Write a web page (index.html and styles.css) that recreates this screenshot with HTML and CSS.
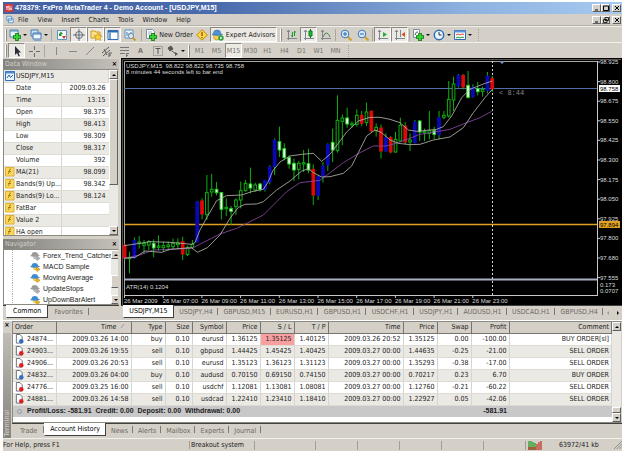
FILE: index.html
```html
<!DOCTYPE html>
<html lang="en">
<head>
<meta charset="utf-8">
<title>478379: FxPro MetaTrader 4 - Demo Account</title>
<link rel="stylesheet" href="styles.css">
</head>
<body>
<svg class="defs" aria-hidden="true">
  <defs>
    <symbol id="i-plus-chart" viewBox="0 0 12 12"><path d="M1 1h8v7H1z" fill="#e8f2fb" stroke="#4a86b8"/><path d="M1 2h8" stroke="#4a86b8"/><path d="M8 4v8M4 8h8" stroke="#0a7a0a" stroke-width="3.600"/><path d="M8 4.800v6.400M4.800 8h6.400" stroke="#3ad03a" stroke-width="2"/></symbol>
    <symbol id="i-profiles" viewBox="0 0 12 12"><path d="M1 1h7v6H1z" fill="#cfe3f6" stroke="#3f79b4"/><path d="M3 4h8v6H3z" fill="#eef6fd" stroke="#3f79b4"/><path d="M3 5h8" stroke="#3f79b4"/><path d="M4 11.500h7" stroke="#7da7d0"/></symbol>
    <symbol id="i-market" viewBox="0 0 12 12"><path d="M1.500 1.500h9v9h-9z" fill="#f4f9fe" stroke="#5a93c4"/><path d="M3 5l2-2.500L7 5z" fill="#1c9a2c"/><path d="M3 5h2.500v2H3z" fill="#1c9a2c"/><path d="M6 7h4L8 10z" fill="#d03a1c"/></symbol>
    <symbol id="i-target" viewBox="0 0 12 12"><circle cx="6" cy="6" r="3.500" fill="none" stroke="#5e6a76"/><path d="M6 0v12M0 6h12" stroke="#5e6a76"/></symbol>
    <symbol id="i-nav" viewBox="0 0 12 12"><path d="M1 2h4l1 1h4v6H1z" fill="#fbe08a" stroke="#c99b22"/><path d="M8 4l1.200 2.500 2.800.3-2 1.800.6 2.900L8 10l-2.600 1.500.6-2.900-2-1.800 2.800-.3z" fill="#ffd23a" stroke="#b8860b" stroke-width=".6"/></symbol>
    <symbol id="i-terminal" viewBox="0 0 12 12"><path d="M1 1.500h10v9H1z" fill="#fff" stroke="#2f6cb5"/><path d="M1 2.500h10" stroke="#2f6cb5" stroke-width="2"/><path d="M3 3v7" stroke="#6ea2d8" stroke-width="2"/></symbol>
    <symbol id="i-tester" viewBox="0 0 12 12"><path d="M1 1h8v8H1z" fill="#eef5fb" stroke="#5a93c4"/><path d="M3 3v4M5 4v3M7 3v3" stroke="#3f79b4"/><circle cx="7" cy="7" r="2.500" fill="#d8ecfa" stroke="#7a8a99"/><path d="M9 9l2.500 2.500" stroke="#c99b22" stroke-width="2"/></symbol>
    <symbol id="i-order" viewBox="0 0 12 12"><path d="M1.500.5h6l2 2v7h-8z" fill="#fff" stroke="#7b8fa3"/><path d="M3 3h4M3 5h5" stroke="#9ab"/><path d="M8 4v8M4 8h8" stroke="#0a7a0a" stroke-width="3.600"/><path d="M8 4.800v6.400M4.800 8h6.400" stroke="#3ad03a" stroke-width="2"/></symbol>
    <symbol id="i-alert" viewBox="0 0 12 12"><path d="M6 .7L11.300 6 6 11.300.7 6z" fill="#ffd84a" stroke="#c48a00"/><path d="M6 3v4M6 8v1.200" stroke="#7a4b00" stroke-width="1.200"/></symbol>
    <symbol id="i-expert" viewBox="0 0 12 12"><circle cx="5" cy="7.500" r="3.500" fill="#f6cf56" stroke="#b98a16" stroke-width=".6"/><path d="M0 5.500Q2 4.500 2.200 2 5 0 8 2q0 3 2.500 3.500Q5 7.500 0 5.500z" fill="#4f93d4" stroke="#2f68a6" stroke-width=".6"/><circle cx="9" cy="9" r="2.700" fill="#25a035"/><path d="M8.200 7.500L10.500 9l-2.300 1.500z" fill="#fff"/></symbol>
    <symbol id="i-bars" viewBox="0 0 12 12"><path d="M2.500 1v10M1 9.500h10M1 3l1.500-2L4 3" fill="none" stroke="#7e868e"/><path d="M6.500 3v5M5 7h1.500M8.500 2v5M8.500 3H10" stroke="#1c9a2c"/></symbol>
    <symbol id="i-candles" viewBox="0 0 12 12"><path d="M2.500 1v10M1 9.500h10M1 3l1.500-2L4 3" fill="none" stroke="#7e868e"/><path d="M7.500 0v9" stroke="#087a18"/><path d="M6 2h3v5H6z" fill="#1ec23a" stroke="#087a18"/></symbol>
    <symbol id="i-line" viewBox="0 0 12 12"><path d="M2.500 1v10M1 9.500h10M1 3l1.500-2L4 3" fill="none" stroke="#7e868e"/><path d="M3 8q2-5 4-4t3 4" fill="none" stroke="#4c8a56"/></symbol>
    <symbol id="i-zoomin" viewBox="0 0 12 12"><path d="M7.500 7.500l4 4" stroke="#d0a020" stroke-width="2"/><circle cx="5" cy="5" r="3.800" fill="#d5eafc" stroke="#3f79b4"/><path d="M5 3v4M3 5h4" stroke="#2a62a8"/></symbol>
    <symbol id="i-zoomout" viewBox="0 0 12 12"><path d="M7.500 7.500l4 4" stroke="#d0a020" stroke-width="2"/><circle cx="5" cy="5" r="3.800" fill="#d5eafc" stroke="#3f79b4"/><path d="M3 5h4" stroke="#2a62a8"/></symbol>
    <symbol id="i-scroll" viewBox="0 0 12 12"><path d="M2.500 1v10M1 9.500h10M1 3l1.500-2L4 3" fill="none" stroke="#7e868e"/><path d="M6 3l4 2.500L6 8z" fill="#1eae34"/></symbol>
    <symbol id="i-shift" viewBox="0 0 12 12"><path d="M2.500 1v10M1 9.500h10M1 3l1.500-2L4 3M6.500 1v7" fill="none" stroke="#7e868e"/><path d="M11 3v5L7.500 5.500z" fill="#d4501c"/></symbol>
    <symbol id="i-indicators" viewBox="0 0 12 12"><path d="M1.500.5h6v8h-6z" fill="#fff" stroke="#7b8fa3"/><path d="M3 6q1-4 3-3" fill="none" stroke="#456"/><path d="M8 4v8M4 8h8" stroke="#0a7a0a" stroke-width="3.600"/><path d="M8 4.800v6.400M4.800 8h6.400" stroke="#3ad03a" stroke-width="2"/></symbol>
    <symbol id="i-clock" viewBox="0 0 12 12"><circle cx="6" cy="6" r="4.700" fill="#eaf4fd" stroke="#2f6cb5" stroke-width="1.500"/><path d="M6 3v3h2.500" fill="none" stroke="#234"/></symbol>
    <symbol id="i-template" viewBox="0 0 12 12"><path d="M.5 1.500h11v9H.5z" fill="#fff" stroke="#2f6cb5"/><path d="M.5 2.500h11" stroke="#5b97d8" stroke-width="2"/><path d="M2 6l2-1 2 1 2-1 2 .5" fill="none" stroke="#d04a2a"/><path d="M2 9l2-1 2 1 2-1 2 .5" fill="none" stroke="#1c9a2c"/></symbol>
    <symbol id="i-cursor" viewBox="0 0 12 12"><path d="M4 1v9l2-2 1.500 3.500 1.300-.6L7.500 7.500H10z" fill="#2b2f38"/></symbol>
    <symbol id="i-cross" viewBox="0 0 12 12"><path d="M6.500 1v4M6.500 8v4M1 6.500h4M8 6.500h4" stroke="#6a6a6a"/></symbol>
    <symbol id="i-vline" viewBox="0 0 12 12"><path d="M6.500 2v8" stroke="#888"/></symbol>
    <symbol id="i-hline" viewBox="0 0 12 12"><path d="M2 6.500h8" stroke="#888"/></symbol>
    <symbol id="i-trend" viewBox="0 0 12 12"><path d="M2 10l8-8" stroke="#888"/></symbol>
    <symbol id="i-channel" viewBox="0 0 12 12"><path d="M1 8l7-6M2 11l7-6M3 4l3 6M8 8h3M8 8v4M8 10h2" fill="none" stroke="#5c5c5c"/></symbol>
    <symbol id="i-fibo" viewBox="0 0 12 12"><path d="M2 2.500h9M2 5.500h9M2 8.500h5M8.500 8v4M8.500 8.500H11M8.500 10.500H10" stroke="#777"/></symbol>
    <symbol id="i-label" viewBox="0 0 12 12"><path d="M1.500 1.500h9v9h-9z" fill="none" stroke="#777" stroke-dasharray="1 1"/><path d="M3.500 3.500h5M6 3.500V9" stroke="#555"/></symbol>
    <symbol id="i-arrows" viewBox="0 0 12 12"><path d="M1 3l3-2 2 3-3 2zM5 6l4 3" fill="#555" stroke="#555"/><path d="M8 7l3 2-3 2z" fill="#555"/></symbol>
    <symbol id="i-hat" viewBox="0 0 12 10"><circle cx="6" cy="5.500" r="3" fill="#f6cf56"/><path d="M0 5Q2 4 2.500 1.500 5-.5 8 1.500q0 2.500 3 3Q6 7 0 5z" fill="#3f8bd0"/><path d="M8 5.500l3 2-3 2.500-2-2z" fill="#e8b52a" stroke="#a97a10" stroke-width=".5"/></symbol>
    <symbol id="i-hat-off" viewBox="0 0 12 10"><circle cx="6" cy="5.500" r="3" fill="#c4c4c4"/><path d="M0 5Q2 4 2.500 1.500 5-.5 8 1.500q0 2.500 3 3Q6 7 0 5z" fill="#9a9a9a"/><path d="M8 5.500l3 2-3 2.500-2-2z" fill="#b0b0b0" stroke="#888" stroke-width=".5"/></symbol>
    <symbol id="i-f" viewBox="0 0 10 10"><path d="M.5.500h8.500v8.500H.5z" fill="#f9d65c" stroke="#e0b030"/><path d="M6 2q-1.500-.5-1.500 1.500T3 7M3 4.500h3" fill="none" stroke="#a07a10"/></symbol>
    <symbol id="i-wave" viewBox="0 0 10 10"><path d="M.5.500h9v9h-9z" fill="#eaf4fd" stroke="#2f6cb5"/><path d="M.5 1.500h9" stroke="#4a8ad0" stroke-width="2"/><path d="M2 7l2-3 1.500 2.500L8 4" fill="none" stroke="#2a62a8"/></symbol>
    <symbol id="i-buy" viewBox="0 0 10 11"><path d="M1.500.5h4l2.500 2.500v7h-6.500z" fill="#fff" stroke="#5b6470"/><circle cx="7" cy="8" r="2.500" fill="#2f6fc0"/></symbol>
    <symbol id="i-sell" viewBox="0 0 10 11"><path d="M1.500.5h4l2.500 2.500v7h-6.500z" fill="#fff" stroke="#5b6470"/><circle cx="7" cy="8" r="2.500" fill="#e01c1c"/></symbol>
  </defs>
</svg>

<div class="app">
  <header class="titlebar">
    <svg class="logo" viewBox="0 0 8 8"><path d="M0 0h8v8H0z" fill="#d8383c"/><path d="M2 2v4M4 1.500v5M6 2v4M1 3h3M4 5h3" stroke="#fff" stroke-width=".8"/></svg>
    <h1>478379: FxPro MetaTrader 4 - Demo Account - [USDJPY,M15]</h1>
    <span class="winbtns">
      <button aria-label="Minimize"><svg viewBox="0 0 6 6"><path d="M1 5h3" stroke="#000"/></svg></button>
      <button aria-label="Maximize"><svg viewBox="0 0 6 6"><path d="M.5 1h5v4.500h-5z" fill="none" stroke="#000"/></svg></button>
      <button aria-label="Close"><svg viewBox="0 0 6 6"><path d="M1 1l4 4M5 1L1 5" stroke="#000"/></svg></button>
    </span>
  </header>

  <nav class="menubar">
    <svg class="menuicon" viewBox="0 0 10 10"><path d="M1 1h6v5H1zM3 4h6v5H3z" fill="#eaf4fd" stroke="#4a86c8"/></svg>
    <button>File</button><button>View</button><button>Insert</button><button>Charts</button><button>Tools</button><button>Window</button><button>Help</button>
    <span class="winbtns">
      <button aria-label="Minimize chart"><svg viewBox="0 0 6 6"><path d="M1 5h3" stroke="#000"/></svg></button>
      <button aria-label="Restore chart"><svg viewBox="0 0 6 6"><path d="M2 .5h3.500v3H2zM.5 2.500H4v3H.5z" fill="#d4d0c8" stroke="#000" stroke-width=".8"/></svg></button>
      <button aria-label="Close chart"><svg viewBox="0 0 6 6"><path d="M1 1l4 4M5 1L1 5" stroke="#000"/></svg></button>
    </span>
  </nav>

  <div class="toolbar">
    <i class="grip"></i>
    <button class="tool drop" aria-label="New chart"><svg><use href="#i-plus-chart"/></svg></button>
    <button class="tool drop" aria-label="Profiles"><svg><use href="#i-profiles"/></svg></button>
    <i class="sep"></i>
    <button class="tool" aria-label="Market Watch"><svg><use href="#i-market"/></svg></button>
    <button class="tool on" aria-label="Data Window"><svg><use href="#i-target"/></svg></button>
    <button class="tool on" aria-label="Navigator"><svg><use href="#i-nav"/></svg></button>
    <button class="tool on" aria-label="Terminal"><svg><use href="#i-terminal"/></svg></button>
    <button class="tool" aria-label="Strategy Tester"><svg><use href="#i-tester"/></svg></button>
    <i class="sep wide"></i>
    <button class="tool text order"><svg><use href="#i-order"/></svg>New Order</button>
    <button class="tool" aria-label="MetaEditor"><svg><use href="#i-alert"/></svg></button>
    <button class="tool text on experts"><svg><use href="#i-expert"/></svg>Expert Advisors</button>
    <i class="grip"></i>
    <button class="tool" aria-label="Bar chart"><svg><use href="#i-bars"/></svg></button>
    <button class="tool on" aria-label="Candlesticks"><svg><use href="#i-candles"/></svg></button>
    <button class="tool" aria-label="Line chart"><svg><use href="#i-line"/></svg></button>
    <i class="sep"></i>
    <button class="tool" aria-label="Zoom in"><svg><use href="#i-zoomin"/></svg></button>
    <button class="tool" aria-label="Zoom out"><svg><use href="#i-zoomout"/></svg></button>
    <i class="sep"></i>
    <button class="tool on" aria-label="Auto scroll"><svg><use href="#i-scroll"/></svg></button>
    <button class="tool on" aria-label="Chart shift"><svg><use href="#i-shift"/></svg></button>
    <i class="sep"></i>
    <button class="tool drop" aria-label="Indicators"><svg><use href="#i-indicators"/></svg></button>
    <button class="tool drop" aria-label="Periods"><svg><use href="#i-clock"/></svg></button>
    <button class="tool drop" aria-label="Templates"><svg><use href="#i-template"/></svg></button>
    <i class="tail"></i>
  </div>

  <div class="toolbar periods">
    <i class="grip"></i>
    <button class="tool on" aria-label="Cursor"><svg><use href="#i-cursor"/></svg></button>
    <button class="tool" aria-label="Crosshair"><svg><use href="#i-cross"/></svg></button>
    <i class="sep"></i>
    <button class="tool" aria-label="Vertical line"><svg><use href="#i-vline"/></svg></button>
    <button class="tool" aria-label="Horizontal line"><svg><use href="#i-hline"/></svg></button>
    <button class="tool" aria-label="Trendline"><svg><use href="#i-trend"/></svg></button>
    <button class="tool" aria-label="Channel"><svg><use href="#i-channel"/></svg></button>
    <button class="tool" aria-label="Fibonacci"><svg><use href="#i-fibo"/></svg></button>
    <button class="tool letter">A</button>
    <button class="tool" aria-label="Text label"><svg><use href="#i-label"/></svg></button>
    <button class="tool drop" aria-label="Arrows"><svg><use href="#i-arrows"/></svg></button>
    <i class="grip"></i>
    <button class="tool">M1</button><button class="tool">M5</button><button class="tool on">M15</button><button class="tool">M30</button><button class="tool">H1</button><button class="tool">H4</button><button class="tool">D1</button><button class="tool">W1</button><button class="tool">MN</button>
    <i class="tail"></i>
  </div>

  <div class="workspace">
    <aside class="side">
      <section class="pane">
        <h2>Data Window<button aria-label="Close Data Window">×</button></h2>
        <div class="scrollbox data">
          <table>
            <colgroup><col><col class="c-value"></colgroup>
            <tbody>
              <tr><th colspan="2" class="sym"><svg><use href="#i-wave"/></svg>USDJPY,M15</th></tr>
              <tr><th>Date</th><td>2009.03.26</td></tr>
              <tr><th>Time</th><td>13:15</td></tr>
              <tr><th>Open</th><td>98.375</td></tr>
              <tr><th>High</th><td>98.413</td></tr>
              <tr><th>Low</th><td>98.309</td></tr>
              <tr><th>Close</th><td>98.317</td></tr>
              <tr><th>Volume</th><td>392</td></tr>
              <tr><th class="ind"><svg><use href="#i-f"/></svg>MA(21)</th><td>98.099</td></tr>
              <tr><th class="ind"><svg><use href="#i-f"/></svg>Bands(9) Up...</th><td>98.342</td></tr>
              <tr><th class="ind"><svg><use href="#i-f"/></svg>Bands(9) Lo...</th><td>98.124</td></tr>
              <tr><th class="ind"><svg><use href="#i-f"/></svg>FatBar</th><td></td></tr>
              <tr><th class="ind"><svg><use href="#i-f"/></svg>Value 2</th><td></td></tr>
              <tr><th class="ind"><svg><use href="#i-f"/></svg>HA open</th><td></td></tr>
            </tbody>
          </table>
          <div class="scroll"><button class="up" aria-label="Up"></button><i class="thumb long"></i><i class="track"></i><button class="down" aria-label="Down"></button></div>
        </div>
      </section>
      <section class="pane">
        <h2>Navigator<button aria-label="Close Navigator">×</button></h2>
        <div class="scrollbox tree">
          <ul>
            <li><svg><use href="#i-hat-off"/></svg>Forex_Trend_Catcher</li>
            <li><svg><use href="#i-hat"/></svg>MACD Sample</li>
            <li><svg><use href="#i-hat"/></svg>Moving Average</li>
            <li><svg><use href="#i-hat-off"/></svg>UpdateStops</li>
            <li><svg><use href="#i-hat"/></svg>UpDownBarAlert</li>
          </ul>
          <div class="scroll"><button class="up" aria-label="Up"></button><i class="track"></i><i class="thumb"></i><i class="gap"></i><button class="down" aria-label="Down"></button></div>
        </div>
        <div class="tabs"><button class="active">Common</button><button>Favorites</button></div>
      </section>
    </aside>

    <main class="chartpane">
      <svg class="chart" id="chart" viewBox="121 58 501 247">
        <rect x="121" y="58" width="501" height="247" fill="#000"/>
        <path d="M122.500 305V59.500H621" fill="none" stroke="#55534e"/>
        <path d="M124.500 296V61.500H598" fill="none" stroke="#a8a69e"/>
        <path d="M124 88.500h474" stroke="#4f6fa6"/>
        <path d="M124 224.500h474" stroke="#e0a020" stroke-width="1.500"/>
        <path d="M492.500 61v235" stroke="#d8d8d8" stroke-dasharray="2 2"/>
        <path d="M499 61h6l-3 3z" fill="#7d93b8"/>
        <g id="candles" transform="scale(.33333)"></g>
        <g fill="none" stroke-width="2.500" transform="scale(.33333)">
          <path stroke="#8a4aa6" d="M372 775L420 765 460 750 575 745 595 735 660 702 710 685 790 645 860 575 900 548 960 541 1030 488 1080 458 1120 438 1160 438 1200 426 1260 403 1350 388 1400 368 1440 353 1477 333"/>
          <path stroke="#b4b4ac" d="M372 737L420 730 450 725 510 727 575 733 585 728 600 690 622 650 650 602 680 587 725 585 755 575 790 568 805 545 818 513 840 486 870 468 905 463 940 460 965 484 990 463 1020 423 1040 396 1075 363 1110 352 1140 352 1170 358 1200 368 1225 390 1250 394 1310 388 1330 380 1355 348 1385 293 1410 268 1450 252 1477 243"/>
          <path stroke="#b4b4ac" d="M372 775L405 772 435 753 485 757 510 748 575 743 592 757 622 743 660 705 690 655 715 622 735 613 770 612 790 605 830 570 870 543 905 513 925 506 940 518 965 531 990 530 1030 520 1055 498 1075 458 1100 408 1125 390 1145 398 1170 420 1195 430 1230 434 1260 433 1300 420 1350 411 1390 383 1420 338 1455 293 1477 268"/>
        </g>
        <path d="M124 279.500h474" stroke="#a9aec0" stroke-width="2"/>
        <path d="M124 295.500h474M597.500 61v235" stroke="#c8c8c8"/>
        <g class="charttext" id="axis">
          <text x="126" y="68" xml:space="preserve">USDJPY,M15  98.822 98.822 98.735 98.758</text>
          <text x="126" y="74">8 minutes 44 seconds left to bar end</text>
          <text x="126" y="289">ATR(14) 0.1204</text>
          <text x="600" y="287">0.173</text>
          <text x="600" y="293">0.0707</text>
          <text class="timer" x="499" y="95">&lt; 8:44</text>
          <rect x="599" y="85" width="21" height="7" fill="#fff"/>
          <rect x="599" y="221" width="21" height="7" fill="#e0a020"/>
          <text class="dark" x="600" y="91">98.758</text>
          <text class="dark" x="600" y="227">97.894</text>
        </g>
      </svg>
      <div class="tabs charttabs">
        <button class="active">USDJPY,M15</button><button>USDJPY,H4</button><button>GBPUSD,M15</button><button>EURUSD,H1</button><button>GBPUSD,H1</button><button>USDCHF,H1</button><button>USDJPY,H1</button><button>AUDUSD,H1</button><button>USDCAD,H1</button><button>GBPUSD,H4</button>
        <span class="scrollers"><i class="left"></i><i class="right"></i></span>
      </div>
    </main>
  </div>

  <section class="terminal">
    <div class="handle"><button aria-label="Close Terminal">×</button><span>Terminal</span></div>
    <div class="termbody">
      <div class="scrollbox history">
        <table>
          <colgroup><col class="c-order"><col class="c-time"><col class="c-34"><col class="c-27"><col class="c-34"><col class="c-34"><col class="c-34"><col class="c-34"><col class="c-time"><col class="c-34"><col class="c-34"><col class="c-profit"><col></colgroup>
          <thead><tr><th class="first">Order</th><th class="sorted">Time<svg viewBox="0 0 6 6"><path d="M1 5l3-4" stroke="#999"/></svg></th><th>Type</th><th>Size</th><th>Symbol</th><th>Price</th><th>S / L</th><th>T / P</th><th>Time</th><th>Price</th><th>Swap</th><th>Profit</th><th>Comment</th></tr></thead>
          <tbody>
            <tr><td class="first"><svg><use href="#i-buy"/></svg>24874...</td><td>2009.03.26 14:00</td><td>buy</td><td>0.10</td><td>eurusd</td><td>1.36125</td><td class="hit">1.35125</td><td>1.40125</td><td>2009.03.26 20:52</td><td>1.35125</td><td>0.00</td><td>-100.00</td><td>BUY ORDER[sl]</td></tr>
            <tr><td class="first"><svg><use href="#i-sell"/></svg>24903...</td><td>2009.03.26 19:55</td><td>sell</td><td>0.10</td><td>gbpusd</td><td>1.44425</td><td>1.45425</td><td>1.40425</td><td>2009.03.27 00:00</td><td>1.44635</td><td>-0.25</td><td>-21.00</td><td>SELL ORDER</td></tr>
            <tr><td class="first"><svg><use href="#i-sell"/></svg>24906...</td><td>2009.03.26 20:53</td><td>sell</td><td>0.10</td><td>eurusd</td><td>1.35123</td><td>1.36123</td><td>1.31123</td><td>2009.03.27 00:00</td><td>1.35293</td><td>-0.38</td><td>-17.00</td><td>SELL ORDER</td></tr>
            <tr><td class="first"><svg><use href="#i-buy"/></svg>24832...</td><td>2009.03.26 04:00</td><td>buy</td><td>0.10</td><td>audusd</td><td>0.70150</td><td>0.69150</td><td>0.74150</td><td>2009.03.27 00:00</td><td>0.70217</td><td>0.23</td><td>6.70</td><td>BUY ORDER</td></tr>
            <tr><td class="first"><svg><use href="#i-sell"/></svg>24776...</td><td>2009.03.25 16:00</td><td>sell</td><td>0.10</td><td>usdchf</td><td>1.12081</td><td>1.13081</td><td>1.08081</td><td>2009.03.27 00:00</td><td>1.12760</td><td>-0.21</td><td>-60.22</td><td>SELL ORDER</td></tr>
            <tr><td class="first"><svg><use href="#i-sell"/></svg>24881...</td><td>2009.03.26 14:58</td><td>sell</td><td>0.10</td><td>usdcad</td><td>1.22410</td><td>1.23410</td><td>1.18410</td><td>2009.03.27 00:00</td><td>1.22927</td><td>0.05</td><td>-42.06</td><td>SELL ORDER</td></tr>
          </tbody>
          <tfoot><tr><td colspan="11" class="first"><i class="dot"></i>Profit/Loss: -581.91&nbsp; Credit: 0.00&nbsp; Deposit: 0.00&nbsp; Withdrawal: 0.00</td><td>-581.91</td><td></td></tr></tfoot>
        </table>
        <div class="scroll"><button class="up" aria-label="Up"></button><i class="track"></i><i class="thumb short"></i><button class="down" aria-label="Down"></button></div>
      </div>
      <div class="tabs termtabs"><button>Trade</button><button class="active">Account History</button><button>News</button><button>Alerts</button><button>Mailbox</button><button>Experts</button><button>Journal</button></div>
    </div>
  </section>

  <footer class="status">
    <span class="help">For Help, press F1</span>
    <span class="profile">Breakout system</span>
    <span class="cell s1"></span><span class="cell s2"></span><span class="cell s2"></span><span class="cell s2"></span><span class="cell s2"></span><span class="cell s2"></span>
    <span class="conn"><svg viewBox="0 0 15 9"><path d="M1 0v9M3 0v9M5 1v8M7 2v7" stroke="#2c9a2c" stroke-width="1.300"/><path d="M1 6v3M3 6v3M5 6v3M7 6v3M9 3v6M11 1v8M13 0v9" stroke="#c23a2a" stroke-width="1.300"/></svg>63972/41 kb</span>
    <svg class="resize" viewBox="0 0 9 9"><path d="M0 9l9-9M3 9l6-6M6 9l3-3" stroke="#8a877f"/></svg>
  </footer>
</div>
<script src="chart.js"></script>
</body>
</html>
```
FILE: styles.css
```css
* { box-sizing: border-box; }
body {
  margin: 0;
  background: #fff;
  color: #1c1c22;
  font: 7px/8px "DejaVu Sans Condensed", "Liberation Sans", sans-serif;
}
button {
  margin: 0;
  padding: 0;
  border: 0;
  background: none;
  color: inherit;
  font: inherit;
  white-space: nowrap;
}
h1, h2, ul { margin: 0; padding: 0; font: inherit; list-style: none; }
svg { display: block; flex: none; }
.defs { width: 0; height: 0; position: absolute; }

.app {
  margin: 2px 3px;
  background: #d4d0c8;
  display: flex;
  flex-direction: column;
}

.titlebar {
  display: flex;
  align-items: center;
  gap: 2px;
  height: 12px;
  padding: 0 1px 0 2px;
  background: linear-gradient(90deg, #4260a2, #4a6cac 35%, #8db2e0 75%, #a6caf0);
  color: #fff;
}
.titlebar h1 {
  flex: 1;
  font-family: "Liberation Sans", Arial, sans-serif;
  font-weight: bold;
  white-space: nowrap;
}
.logo { width: 8px; height: 8px; }
.winbtns { display: flex; margin-left: auto; }
.winbtns button {
  display: grid;
  place-items: center;
  width: 9px;
  height: 8px;
  background: #d4d0c8;
  border: 1px solid;
  border-color: #fff #606060 #606060 #fff;
}
.winbtns button:last-child { margin-left: 2px; }
.winbtns svg { width: 6px; height: 6px; }

.menubar {
  display: flex;
  align-items: center;
  gap: 9px;
  height: 12px;
  padding: 0 1px 0 3px;
  border-bottom: 1px solid #b4b1a9;
}
.menuicon { width: 8px; height: 9px; margin-right: -5px; }

.toolbar {
  display: flex;
  align-items: center;
  height: 16px;
  padding-left: 1px;
  border-top: 1px solid #f2f0ec;
}
.grip {
  width: 2px;
  height: 12px;
  margin: 0 1px;
  border-left: 1px solid #fff;
  border-right: 1px solid #8c8981;
}
.sep { width: 1px; height: 12px; margin: 0 1px; background: #aaa79f; }
.sep.wide { margin: 0 3px; }
.tail { width: 1px; height: 12px; margin-left: 4px; border-left: 1px dotted #aaa79f; }
.tool {
  display: flex;
  align-items: center;
  justify-content: center;
  width: 17px;
  height: 15px;
  border: 1px solid transparent;
}
.tool svg { width: 12px; height: 12px; }
.tool.on {
  background: #ece9e4;
  border-color: #8c8981 #fff #fff #8c8981;
}
.tool.drop { width: 21px; justify-content: flex-start; gap: 2px; }
.tool.drop::after {
  content: "";
  border: 2px solid transparent;
  border-top-color: #111;
  border-bottom: 0;
}
.tool.text { width: auto; gap: 2px; padding: 0 1px; }
.tool.order { width: 48px; }
.tool.experts { width: 67px; margin-right: 2px; }
.tool.letter { font-weight: bold; }
.periods { color: #77746d; }
.periods .sep { margin: 0 2px; }

.workspace {
  display: grid;
  grid-template-columns: 116px 1fr;
  column-gap: 2px;
}
.side { display: flex; flex-direction: column; gap: 3px; padding-top: 1px; }
.pane h2 {
  display: flex;
  align-items: center;
  justify-content: space-between;
  height: 10px;
  padding: 0 2px;
  background: linear-gradient(90deg, #84827e, #c4c1ba);
  color: #d4d0c8;
}
.pane h2 button { color: #000; font-weight: bold; }
.scrollbox {
  display: flex;
  overflow: hidden;
  background: #fff;
  border: 1px solid #8c8981;
  border-right-color: #d4d0c8;
}
.data { height: 167px; }
.tree { height: 56px; }
table { border-collapse: collapse; table-layout: fixed; flex: 1; width: 100%; }
th, td {
  padding: 0;
  height: 12px;
  line-height: 10px;
  font-weight: normal;
  white-space: nowrap;
}
.data table { align-self: flex-start; }
.data tr:nth-child(odd) { background: #ebe9e4; }
.data th { text-align: left; padding-left: 12px; border-right: 1px solid #d8d5ce; border-bottom: 1px solid #dedbd5; }
.data td { text-align: right; padding-right: 3px; border-bottom: 1px solid #dedbd5; }
.data th.sym, .data th.ind { padding-left: 1px; }
.data th svg { float: left; width: 10px; height: 10px; margin-right: 1px; }
.c-value { width: 47px; }

.scroll {
  display: flex;
  flex-direction: column;
  flex: none;
  width: 9px;
  background: #ebe9e4;
}
.scroll button, .thumb {
  display: grid;
  place-items: center;
  height: 9px;
  background: #d4d0c8;
  border: 1px solid;
  border-color: #fff #606060 #606060 #fff;
}
.track { flex: 1; }
.gap { height: 7px; }
.thumb { height: 13px; }
.thumb.long { height: 106px; }
.thumb.short { height: 6px; }
.up::before, .down::before { content: ""; border: 2px solid transparent; }
.up::before { border-top: 0; border-bottom-color: #000; }
.down::before { border-bottom: 0; border-top-color: #000; }

.tree ul { flex: 1; padding-left: 8px; }
.tree li {
  display: flex;
  align-items: center;
  gap: 2px;
  height: 11px;
  padding-left: 17px;
  border-left: 1px dotted #b0b0b0;
  font-family: "Liberation Sans", Arial, sans-serif;
  white-space: nowrap;
}
.tree li svg { width: 11px; height: 10px; }

.tabs {
  display: flex;
  height: 14px;
  color: #6c6962;
  border-top: 1px solid #404040;
}
.tabs button {
  position: relative;
  height: 11px;
  padding: 0 8px;
}
.tabs button:not(.active)::after {
  content: "";
  position: absolute;
  right: 0;
  top: 2px;
  height: 7px;
  border-right: 1px solid #7c7972;
}
.tabs .active {
  height: 13px;
  margin-top: -1px;
  background: #fff;
  color: #000;
  border: 1px solid #404040;
  border-top: 0;
  border-left-color: #fff;
}
.side .tabs { padding-left: 3px; }
.side .tabs button { padding: 0 6px; }

.chartpane { min-width: 0; }
.chart { width: 100%; height: auto; }
.charttext text { font-family: "Liberation Sans", Arial, sans-serif; font-size: 6px; fill: #dcdcdc; }
.charttext .dark { fill: #000; }
.charttext .timer { fill: #8a8a8a; font-family: "Liberation Mono", monospace; font-size: 7px; }
.charttabs { padding-left: 2px; }
.charttabs button { padding: 0 5px; flex: 1 1 auto; }
.scrollers { display: flex; gap: 8px; align-items: center; padding: 0 3px 0 4px; }
.scrollers i { border: 2px solid transparent; }
.scrollers .left { border-left: 0; border-right-color: #999; }
.scrollers .right { border-right: 0; border-left-color: #000; }

.terminal { display: flex; border-top: 1px solid #fff; margin-top: 1px; }
.handle {
  display: flex;
  flex-direction: column;
  align-items: center;
  justify-content: space-between;
  width: 8px;
  margin-right: 1px;
  padding-bottom: 2px;
  background: linear-gradient(#d4d0c8 12px, #c0bdb6 12px, #84827e);
  color: #d4d0c8;
}
.handle button { color: #000; font-weight: bold; }
.handle span { writing-mode: vertical-rl; transform: rotate(180deg); }
.termbody { flex: 1; min-width: 0; }
.history { height: 102px; }
.history table { align-self: flex-start; }
.history td, .history th { text-align: right; padding-right: 2px; }
.history thead th {
  height: 11px;
  background: #d4d0c8;
  border-right: 1px solid #77746d;
  border-bottom: 1px solid #77746d;
}
.history td { border-right: 1px solid #d8d5ce; border-bottom: 1px solid #dedbd5; }
.history tbody tr:nth-child(even) { background: #ebe9e4; }
.history .first { text-align: left; padding-left: 2px; }
.history td svg { float: left; width: 9px; height: 10px; margin-right: 3px; }
.history .sorted svg { display: inline-block; width: 6px; height: 6px; margin: 0 3px; }
.history .hit { background: #f8a0a0; }
.history tfoot td {
  background: #c8c8c8;
  border: 0;
  font-family: "Liberation Sans", Arial, sans-serif;
  font-weight: bold;
}
.dot { float: left; width: 5px; height: 5px; margin: 3px 5px 0 2px; border: 1px solid #999; border-radius: 50%; }
.c-order { width: 43px; }
.c-time { width: 75px; }
.c-34 { width: 34px; }
.c-27 { width: 27px; }
.c-profit { width: 38px; }
.termtabs { padding-left: 1px; height: 15px; }
.termtabs button { padding: 0 5px; height: 13px; }
.termtabs button:first-child { padding: 0 7px; }

.status {
  display: flex;
  align-items: center;
  height: 13px;
  border-top: 1px solid #f2f0ec;
}
.help { flex: 1; }
.profile { width: 65px; }
.cell { height: 9px; border-left: 1px solid #a19e96; }
.s1 { width: 61px; }
.s2 { width: 42px; }
.profile { padding-left: 1px; border-left: 1px solid #a19e96; }
.conn { display: flex; align-items: center; gap: 16px; width: 89px; padding-left: 2px; border-left: 1px solid #a19e96; }
.conn svg { width: 15px; height: 9px; }
.resize { width: 8px; height: 8px; }
```
FILE: chart.js
```js
// Candles: [kind, high, low, body top, body bottom]; r = red, b = blue, w = filled white, g = hollow green.
const candles = [
  ['r',732,780,735,774],['g',755,820,772,776],['b',712,776,722,774],['g',708,746,726,730],['g',720,762,730,736],
  ['g',720,750,725,735],['w',718,772,730,744],['g',706,752,738,742],['g',725,755,737,743],['g',724,752,735,740],
  ['g',716,747,730,740],['g',715,748,728,734],['r',710,780,725,762],['g',737,768,742,764],['g',720,748,733,742],
  ['b',603,728,606,726],['r',595,658,603,642],['g',525,660,578,644],['g',522,590,568,576],['w',546,586,568,578],
  ['w',576,658,578,628],['g',595,648,622,626],['w',618,675,626,634],['g',595,645,600,620],['g',545,625,572,600],
  ['g',540,575,550,572],['w',503,580,552,564],['g',548,575,555,570],['w',548,575,552,568],['b',540,575,541,568],
  ['b',496,553,501,546],['b',415,525,420,500],['w',380,471,425,450],['w',430,481,446,473],['w',466,506,473,492],
  ['w',476,543,490,510],['g',483,538,490,508],['g',450,516,488,492],['w',446,520,491,510],['r',493,615,508,585],
  ['b',526,600,529,586],['b',486,548,498,530],['b',430,513,433,495],['w',386,486,427,450],['g',286,458,361,451],
  ['g',343,436,354,364],['w',323,383,354,372],['g',364,383,371,375],['g',328,380,346,373],['r',333,378,346,370],
  ['g',308,378,336,368],['r',331,396,334,393],['g',370,410,382,392],['r',374,476,384,453],['b',400,456,413,453],
  ['r',408,460,413,456],['g',396,458,418,456],['g',353,426,376,423],['r',366,433,378,426],['g',400,453,420,426],
  ['b',360,430,366,428],['w',360,423,363,396],['g',386,423,394,398],['g',333,418,392,400],['w',380,418,392,403],
  ['b',333,418,353,404],['g',333,358,346,352],['g',243,353,298,348],['g',230,333,252,300],['b',222,263,226,258],
  ['r',223,268,226,261],['w',213,296,256,292],['b',253,293,262,290],['w',246,286,266,275],['g',260,290,268,274],
  ['b',216,280,228,272],['r',228,276,236,266]
];
const fills = { r: '#e00808', b: '#0808b8', w: '#ffffff', g: '#000000' };
const edges = { r: '#e00808', b: '#0808b8', w: '#20d820', g: '#10b010' };
const NS = 'http://www.w3.org/2000/svg';

function add(parent, tag, attrs, text) {
  const node = document.createElementNS(NS, tag);
  for (const key in attrs) node.setAttribute(key, attrs[key]);
  if (text) node.textContent = text;
  parent.append(node);
}

const layer = document.getElementById('candles');
candles.forEach(([kind, high, low, top, bottom], i) => {
  const x = 374 + i * 14.51;
  add(layer, 'path', { d: `M${x} ${high}V${low}`, stroke: '#10b010', 'stroke-width': 3 });
  add(layer, 'rect', {
    x: x - 4, y: top, width: 8, height: bottom - top,
    fill: fills[kind], stroke: edges[kind], 'stroke-width': 3
  });
});

const axis = document.getElementById('axis');
const prices = ['98.925','98.800','98.675','98.550','98.425','98.300','98.175','98.050','97.925','97.800','97.680','97.555'];
prices.forEach((price, i) => {
  const y = 62 + i * 19.6;
  add(axis, 'path', { d: `M597 ${y}h3`, stroke: '#c8c8c8' });
  const label = document.createElementNS(NS, 'text');
  label.setAttribute('x', 600);
  label.setAttribute('y', y + 2);
  label.textContent = price;
  axis.prepend(label);
});
const times = ['2009','07:00','09:00','11:00','13:00','15:00','17:00','19:00','21:00','23:00'];
times.forEach((time, i) => {
  const x = 124 + i * 38.7;
  add(axis, 'path', { d: `M${x + 0.5} 295v3`, stroke: '#c8c8c8' });
  add(axis, 'text', { x, y: 303 }, '26 Mar ' + time);
});
```
